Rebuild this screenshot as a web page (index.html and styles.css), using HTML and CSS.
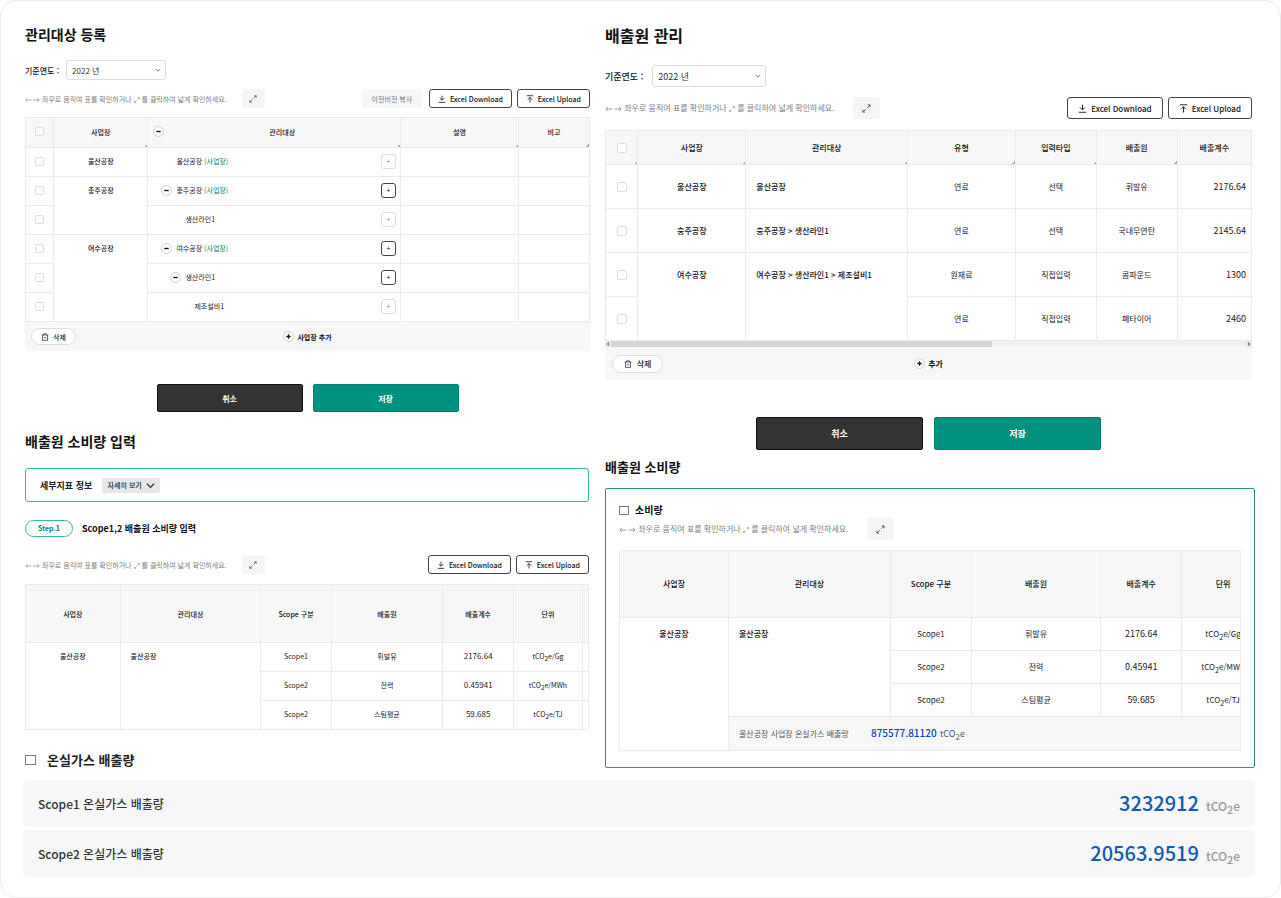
FILE: index.html
```html
<!DOCTYPE html>
<html lang="ko">
<head>
<meta charset="utf-8">
<title>배출원 관리</title>
<link rel="stylesheet" href="styles.css">
</head>
<body>
<svg class="sprite" aria-hidden="true">
  <symbol id="i-expand" viewBox="0 0 10 10"><path d="M6.4 1H9v2.6M9 1 5.8 4.2M3.6 9H1V6.4M1 9l3.2-3.2" fill="none" stroke="currentColor"/></symbol>
  <symbol id="i-arrows" viewBox="0 0 18 8"><path d="M8 4H1M3 2 1 4l2 2M10 4h7M15 2l2 2-2 2" fill="none" stroke="currentColor" stroke-width=".8"/></symbol>
  <symbol id="i-down" viewBox="0 0 10 10"><path d="M5 .8v5.4M2.2 3.8 5 6.6l2.8-2.8M1 9.2h8" fill="none" stroke="currentColor"/></symbol>
  <symbol id="i-up" viewBox="0 0 10 10"><path d="M5 9.4V3.2M2.2 5.8 5 3l2.8 2.8M1 .9h8" fill="none" stroke="currentColor"/></symbol>
  <symbol id="i-chev" viewBox="0 0 10 10"><path d="m1 3 4 4 4-4" fill="none" stroke="currentColor" stroke-width="1.3"/></symbol>
  <symbol id="i-trash" viewBox="0 0 10 10"><path d="M.8 2.5h8.4M3.3 2.3V1h3.4v1.3M1.8 2.6v6.6h6.4V2.6M3.6 5.9h2.8" fill="none" stroke="currentColor" stroke-width=".9"/></symbol>
  <symbol id="i-minus" viewBox="0 0 12 12"><circle cx="6" cy="6" r="5.4" fill="#fff" stroke="#c4c4c4" stroke-width=".9"/><path d="M3.6 6h4.8" stroke="#111" stroke-width="1.5"/></symbol>
  <symbol id="i-plus" viewBox="0 0 12 12"><circle cx="6" cy="6" r="5.4" fill="#fff" stroke="#c4c4c4" stroke-width=".9"/><path d="M3.6 6h4.8M6 3.6v4.8" stroke="#111" stroke-width="1.4"/></symbol>
  <symbol id="i-left" viewBox="0 0 6 6"><path d="M4 1v4L1.6 3z" fill="currentColor"/></symbol>
  <symbol id="i-right" viewBox="0 0 6 6"><path d="M2 1v4l2.4-2z" fill="currentColor"/></symbol>
</svg>
<main class="page">
  <div class="columns">
    <div class="col-left">
      <h2 class="title">관리대상 등록</h2>
      <div class="filter">
        <label for="year-a">기준연도 :</label>
        <span class="select"><select id="year-a"><option>2022 년</option></select><svg><use href="#i-chev"/></svg></span>
      </div>
      <div class="toolbar">
        <p class="hint"><svg class="arrows"><use href="#i-arrows"/></svg> 좌우로 움직여 표를 확인하거나 <svg class="mini"><use href="#i-expand"/></svg> 를 클릭하여 넓게 확인하세요.</p>
        <button class="expand" aria-label="넓게 보기"><svg><use href="#i-expand"/></svg></button>
        <div class="tools">
          <button class="copy">이전버전 복사</button>
          <button class="excel"><svg><use href="#i-down"/></svg>Excel Download</button>
          <button class="excel"><svg><use href="#i-up"/></svg>Excel Upload</button>
        </div>
      </div>
      <table class="grid targets">
        <colgroup><col class="w-check"><col class="w-site"><col class="w-target"><col class="w-desc"><col class="w-note"></colgroup>
        <thead>
          <tr><th><input type="checkbox" aria-label="전체 선택"></th><th class="rs">사업장</th>
            <th class="rs"><div class="tree-head"><button class="toggle" aria-label="접기"><svg><use href="#i-minus"/></svg></button><span>관리대상</span></div></th>
            <th class="rs">설명</th><th class="rs">비고</th></tr>
        </thead>
        <tbody>
          <tr><td><input type="checkbox" aria-label="선택"></td><td class="site">울산공장</td>
            <td><div class="tree d1"><span class="toggle"></span><span>울산공장 <em>(사업장)</em></span><button class="add" disabled>+</button></div></td><td></td><td></td></tr>
          <tr><td><input type="checkbox" aria-label="선택"></td><td class="site" rowspan="2">충주공장</td>
            <td><div class="tree d1"><button class="toggle" aria-label="접기"><svg><use href="#i-minus"/></svg></button><span>충주공장 <em>(사업장)</em></span><button class="add">+</button></div></td><td></td><td></td></tr>
          <tr><td><input type="checkbox" aria-label="선택"></td>
            <td><div class="tree d2"><span class="toggle"></span><span>생산라인1</span><button class="add" disabled>+</button></div></td><td></td><td></td></tr>
          <tr><td><input type="checkbox" aria-label="선택"></td><td class="site" rowspan="3">여수공장</td>
            <td><div class="tree d1"><button class="toggle" aria-label="접기"><svg><use href="#i-minus"/></svg></button><span>여수공장 <em>(사업장)</em></span><button class="add">+</button></div></td><td></td><td></td></tr>
          <tr><td><input type="checkbox" aria-label="선택"></td>
            <td><div class="tree d2"><button class="toggle" aria-label="접기"><svg><use href="#i-minus"/></svg></button><span>생산라인1</span><button class="add">+</button></div></td><td></td><td></td></tr>
          <tr><td><input type="checkbox" aria-label="선택"></td>
            <td><div class="tree d3"><span class="toggle"></span><span>제조설비1</span><button class="add" disabled>+</button></div></td><td></td><td></td></tr>
        </tbody>
      </table>
      <div class="table-foot">
        <button class="delete"><svg><use href="#i-trash"/></svg>삭제</button>
        <button class="append"><svg><use href="#i-plus"/></svg>사업장 추가</button>
      </div>
      <div class="actions"><button class="cancel">취소</button><button class="save">저장</button></div>

      <h2 class="title title-input">배출원 소비량 입력</h2>
      <div class="detail"><strong>세부지표 정보</strong><button>자세히 보기<svg><use href="#i-chev"/></svg></button></div>
      <div class="step"><span class="pill">Step.1</span><h3>Scope1,2 배출원 소비량 입력</h3></div>
      <div class="toolbar toolbar-input">
        <p class="hint"><svg class="arrows"><use href="#i-arrows"/></svg> 좌우로 움직여 표를 확인하거나 <svg class="mini"><use href="#i-expand"/></svg> 를 클릭하여 넓게 확인하세요.</p>
        <button class="expand" aria-label="넓게 보기"><svg><use href="#i-expand"/></svg></button>
        <div class="tools">
          <button class="excel"><svg><use href="#i-down"/></svg>Excel Download</button>
          <button class="excel"><svg><use href="#i-up"/></svg>Excel Upload</button>
        </div>
      </div>
      <table class="grid usage-input">
        <colgroup><col class="u-site"><col class="u-target"><col class="u-scope"><col class="u-source"><col class="u-factor"><col class="u-unit"><col class="u-rest"></colgroup>
        <thead><tr><th>사업장</th><th>관리대상</th><th>Scope 구분</th><th>배출원</th><th>배출계수</th><th>단위</th><th></th></tr></thead>
        <tbody>
          <tr><td class="site" rowspan="3">울산공장</td><td class="site start" rowspan="3">울산공장</td><td>Scope1</td><td>휘발유</td><td class="num">2176.64</td><td>tCO<sub>2</sub>e/Gg</td><td></td></tr>
          <tr><td>Scope2</td><td>전력</td><td class="num">0.45941</td><td>tCO<sub>2</sub>e/MWh</td><td></td></tr>
          <tr><td>Scope2</td><td>스팀평균</td><td class="num">59.685</td><td>tCO<sub>2</sub>e/TJ</td><td></td></tr>
        </tbody>
      </table>
      <h2 class="title title-ghg"><i class="square"></i>온실가스 배출량</h2>
    </div>

    <div class="col-right">
      <div class="source">
        <h2 class="title">배출원 관리</h2>
        <div class="filter">
          <label for="year-b">기준연도 :</label>
          <span class="select"><select id="year-b"><option>2022 년</option></select><svg><use href="#i-chev"/></svg></span>
        </div>
        <div class="toolbar">
          <p class="hint"><svg class="arrows"><use href="#i-arrows"/></svg> 좌우로 움직여 표를 확인하거나 <svg class="mini"><use href="#i-expand"/></svg> 를 클릭하여 넓게 확인하세요.</p>
          <button class="expand" aria-label="넓게 보기"><svg><use href="#i-expand"/></svg></button>
          <div class="tools">
            <button class="excel"><svg><use href="#i-down"/></svg>Excel Download</button>
            <button class="excel"><svg><use href="#i-up"/></svg>Excel Upload</button>
          </div>
        </div>
        <table class="grid sources">
          <colgroup><col class="s-check"><col class="s-site"><col class="s-target"><col class="s-site"><col class="s-mid"><col class="s-mid"><col class="s-last"></colgroup>
          <thead><tr><th class="rs"><input type="checkbox" aria-label="전체 선택"></th><th class="rs">사업장</th><th class="rs">관리대상</th><th class="rs">유형</th><th class="rs">입력타입</th><th class="rs">배출원</th><th>배출계수</th></tr></thead>
          <tbody>
            <tr><td><input type="checkbox" aria-label="선택"></td><td class="site">울산공장</td><td class="site start">울산공장</td><td>연료</td><td>선택</td><td>휘발유</td><td class="num end">2176.64</td></tr>
            <tr><td><input type="checkbox" aria-label="선택"></td><td class="site">충주공장</td><td class="site start">충주공장 &gt; 생산라인1</td><td>연료</td><td>선택</td><td>국내무연탄</td><td class="num end">2145.64</td></tr>
            <tr><td><input type="checkbox" aria-label="선택"></td><td class="site" rowspan="2">여수공장</td><td class="site start" rowspan="2">여수공장 &gt; 생산라인1 &gt; 제조설비1</td><td>원재료</td><td>직접입력</td><td>콤파운드</td><td class="num end">1300</td></tr>
            <tr><td><input type="checkbox" aria-label="선택"></td><td>연료</td><td>직접입력</td><td>폐타이어</td><td class="num end">2460</td></tr>
          </tbody>
        </table>
        <div class="scroll"><svg><use href="#i-left"/></svg><div class="track"><div class="thumb"></div></div><svg><use href="#i-right"/></svg></div>
        <div class="table-foot">
          <button class="delete"><svg><use href="#i-trash"/></svg>삭제</button>
          <button class="append"><svg><use href="#i-plus"/></svg>추가</button>
        </div>
        <div class="actions"><button class="cancel">취소</button><button class="save">저장</button></div>
      </div>

      <h2 class="title title-usage">배출원 소비량</h2>
      <section class="usage">
        <h3><i class="square"></i>소비량</h3>
        <div class="toolbar">
          <p class="hint"><svg class="arrows"><use href="#i-arrows"/></svg> 좌우로 움직여 표를 확인하거나 <svg class="mini"><use href="#i-expand"/></svg> 를 클릭하여 넓게 확인하세요.</p>
          <button class="expand" aria-label="넓게 보기"><svg><use href="#i-expand"/></svg></button>
        </div>
        <div class="clip">
          <table class="grid usage-table">
            <colgroup><col class="c-site"><col class="c-target"><col class="c-mid"><col class="c-source"><col class="c-mid"><col class="c-last"></colgroup>
            <thead><tr><th>사업장</th><th>관리대상</th><th>Scope 구분</th><th>배출원</th><th>배출계수</th><th>단위</th></tr></thead>
            <tbody>
              <tr><td class="site" rowspan="4">울산공장</td><td class="site start" rowspan="3">울산공장</td><td>Scope1</td><td>휘발유</td><td class="num">2176.64</td><td>tCO<sub>2</sub>e/Gg</td></tr>
              <tr><td>Scope2</td><td>전력</td><td class="num">0.45941</td><td>tCO<sub>2</sub>e/MWh</td></tr>
              <tr><td>Scope2</td><td>스팀평균</td><td class="num">59.685</td><td>tCO<sub>2</sub>e/TJ</td></tr>
              <tr class="total"><td colspan="5">울산공장 사업장 온실가스 배출량 <b>875577.81120</b> <span>tCO<sub>2</sub>e</span></td></tr>
            </tbody>
          </table>
        </div>
      </section>
    </div>
  </div>

  <dl class="summary">
    <div><dt>Scope1 온실가스 배출량</dt><dd><b>3232912</b><span>tCO<sub>2</sub>e</span></dd></div>
    <div><dt>Scope2 온실가스 배출량</dt><dd><b>20563.9519</b><span>tCO<sub>2</sub>e</span></dd></div>
  </dl>
</main>
</body>
</html>
```
FILE: styles.css
```css
* { box-sizing: border-box; }
body, h2, h3, p, dl, dd { margin: 0; }
body {
  background: #fff;
  color: #222;
  font-family: "Noto Sans CJK KR", "Noto Sans", sans-serif;
  font-size: 8px;
}
button, input, select { font: inherit; color: inherit; margin: 0; padding: 0; }
button { background: none; border: 0; display: inline-flex; align-items: center; justify-content: center; white-space: nowrap; }
svg { display: block; flex: none; }
sub { font-size: 90%; line-height: 0; }
.sprite { position: absolute; width: 0; height: 0; }

.page { border: 1px solid #ebebeb; border-radius: 16px; padding: 23px 25px 20px 22px; }
.columns { display: grid; grid-template-columns: minmax(0, 567fr) minmax(0, 650fr); gap: 15px; }
.col-left { padding-left: 2px; display: flex; flex-direction: column; }
.col-right { display: flex; flex-direction: column; font-size: 8px; }
.source { margin-right: 3px; }

.title { font-size: 14px; line-height: 20px; font-weight: 700; color: #111; display: flex; align-items: center; }
.source .title { font-size: 16px; line-height: 22px; }
.title-input { margin-top: 19px; }
.title-ghg { font-size: 13px; margin-top: 20px; gap: 11px; color: #222; }
.title-usage { font-size: 13px; line-height: 18px; margin-top: 8px; }
.square { width: 11px; height: 10px; border: 1px solid #777; }

.filter { display: flex; align-items: center; gap: 7px; margin-top: 16px; font-weight: 500; color: #111; }
.select { position: relative; width: 100px; height: 20px; }
.select select { appearance: none; width: 100%; height: 100%; border: 1px solid #ddd; border-radius: 3px; background: #fff; padding: 0 5px; color: #333; font-weight: 400; }
.select svg { position: absolute; right: 5px; top: 50%; width: 6px; height: 6px; margin-top: -3px; color: #555; pointer-events: none; }
.source .filter { margin-top: 19px; font-size: 9px; gap: 9px; }
.source .select { width: 114px; height: 22px; }

.toolbar { display: flex; align-items: center; margin-top: 9px; height: 19px; }
.hint { color: #808080; font-size: 7px; line-height: 12px; white-space: nowrap; }
.hint svg { display: inline-block; vertical-align: middle; }
.arrows { width: 15px; height: 8px; }
.mini { width: 6px; height: 6px; }
.expand { width: 23px; height: 19px; margin-left: 15px; background: #f5f5f5; border-radius: 2px; color: #555; }
.expand svg { width: 8px; height: 8px; }
.tools { margin-left: auto; display: flex; gap: 5px; }
.copy { width: 60px; height: 19px; margin-right: 2px; background: #f6f6f6; border-radius: 2px; color: #777; font-size: 7px; }
.excel { height: 19px; padding: 0 8px; gap: 4px; border: 1px solid #444; border-radius: 3px; background: #fff; color: #111; font-size: 7px; font-weight: 500; }
.excel svg { width: 8px; height: 8px; }
.toolbar-input { margin-top: 18px; padding-right: 1px; }
.col-right .toolbar { height: 22px; margin-top: 10px; }
.col-right .hint { font-size: 8px; }
.col-right .arrows { width: 17px; }
.col-right .expand { width: 27px; height: 22px; margin-left: 19px; }
.col-right .expand svg { width: 9px; height: 9px; }
.col-right .excel { height: 22px; font-size: 8px; padding: 0 10px; }
.col-right .excel svg { width: 9px; height: 9px; }

.grid { width: 100%; table-layout: fixed; border-collapse: collapse; margin-top: 9px; font-size: 7px; line-height: 12px; }
.grid th, .grid td { border: 1px solid #ebebee; padding: 0; text-align: center; }
.grid th { background: #f7f7f7; font-weight: 500; color: #111; }
.grid .rs { background: linear-gradient(135deg, transparent 50%, #aaa 50%) right bottom / 3px 3px no-repeat #f7f7f7; }
.grid .site { vertical-align: top; padding-top: 8px; font-weight: 500; color: #111; }
.grid .start { text-align: left; padding-left: 10px; }
.grid .num { font-size: 8px; }
.grid .end { text-align: right; padding-right: 5px; }
input[type="checkbox"] { appearance: none; display: block; width: 9px; height: 9px; margin: 0 auto; border: 1px solid #ddd; border-radius: 2px; background: #fff; }

.targets th { height: 30px; padding-bottom: 2px; }
.targets td { height: 29px; padding-bottom: 2px; }
.targets .site, .usage-input .site { padding-top: 7px; }
.w-check { width: 5%; } .w-site { width: 16.7%; } .w-target { width: 44.8%; } .w-desc { width: 20.9%; } .w-note { width: 12.6%; }
.toggle { width: 11px; height: 11px; }
.toggle svg { width: 11px; height: 11px; }
.tree-head { display: flex; align-items: center; padding-left: 5px; }
.tree-head span { flex: 1; }
.tree { display: flex; align-items: center; gap: 4px; padding-right: 4px; }
.tree em { font-style: normal; color: #00806c; }
.d1 { padding-left: 13px; } .d2 { padding-left: 22px; } .d3 { padding-left: 31px; }
.add { width: 15px; height: 15px; margin-left: auto; border: 1px solid #444; border-radius: 3px; background: #fff; line-height: 12px; color: #111; }
.add:disabled { border-color: #ddd; color: #888; }

.table-foot { display: grid; grid-template-columns: 1fr auto 1fr; align-items: center; height: 29px; background: #f7f7f7; padding: 0 6px; }
.delete { justify-self: start; width: 45px; height: 17px; gap: 4px; border: 1px solid #ddd; border-radius: 9px; background: #fff; font-weight: 500; font-size: 7px; }
.delete svg { width: 8px; height: 8px; }
.append { gap: 3px; font-weight: 700; font-size: 7px; color: #111; }
.append svg { width: 11px; height: 11px; }

.actions { display: flex; justify-content: center; gap: 10px; margin-top: 33px; }
.actions button { width: 146px; height: 28px; border-radius: 2px; color: #fff; font-weight: 700; border: 1px solid #111; background: #333; }
.actions .save { background: #009180; border-color: #007f6e; }

.detail { display: flex; align-items: center; gap: 10px; height: 34px; margin: 17px 1px 0 0; padding-left: 14px; border: 1px solid #3cb5a2; border-radius: 3px; font-size: 9px; }
.detail strong { font-weight: 700; color: #222; }
.detail button { width: 58px; height: 15px; gap: 4px; background: #e7e7e7; border-radius: 2px; font-size: 7px; font-weight: 500; }
.detail svg { width: 9px; height: 9px; }
.step { display: flex; align-items: center; gap: 9px; margin-top: 18px; height: 17px; }
.pill { width: 48px; height: 17px; border: 1px solid #3cb5a2; border-radius: 9px; color: #00806c; font-weight: 700; font-size: 7px; line-height: 15px; text-align: center; }
.step h3 { font-size: 9px; font-weight: 700; color: #111; }

.usage-input { width: auto; margin: 10px 1px 0 0; }
.usage-input th { height: 58px; }
.usage-input td { height: 29px; padding-bottom: 2px; }
.u-site { width: 16.8%; } .u-target { width: 25%; } .u-scope { width: 12.5%; } .u-source { width: 19.8%; } .u-factor { width: 12.6%; } .u-unit { width: 12.2%; } .u-rest { width: 1.1%; }

.col-right .grid { font-size: 8px; }
.col-right .num { font-size: 9px; }
.col-right input[type="checkbox"] { width: 10px; height: 10px; }
.col-right .sources { margin-top: 11px; }
.sources th { height: 34px; }
.sources td { height: 44px; }
.sources .site { padding-top: 16px; }
.s-check { width: 5%; } .s-site { width: 16.7%; } .s-target { width: 25%; } .s-mid { width: 12.5%; } .s-last { width: 11.5%; }
.scroll { display: flex; height: 6px; background: #f1f1f1; color: #777; }
.scroll svg { width: 6px; height: 6px; background: #e4e4e4; }
.track { flex: 1; }
.thumb { width: 60%; height: 6px; background: #d6d6d6; }
.col-right .table-foot { height: 33px; padding: 0 7px; }
.col-right .delete { width: 51px; height: 18px; font-size: 8px; gap: 5px; }
.col-right .append { font-size: 8px; }
.col-right .actions { gap: 11px; margin-top: 37px; }
.col-right .actions button { width: 167px; height: 33px; font-size: 9px; }

.usage { margin-top: 12px; padding: 13px 13px 16px; border: 1px solid #2f8e85; border-radius: 2px; }
.usage h3 { display: flex; align-items: center; gap: 6px; font-size: 10px; line-height: 16px; font-weight: 700; color: #111; }
.usage h3 .square { width: 10px; height: 9px; }
.col-right .usage .toolbar { margin-top: 0; }
.clip { overflow-x: auto; scrollbar-width: none; margin-top: 10px; border-right: 1px solid #ebebee; }
.clip .usage-table { width: 104%; margin: 0; }
.usage-table th { height: 67px; }
.usage-table td { height: 33px; }
.usage-table .site { padding-top: 10px; }
.c-site { width: 16.9%; } .c-target { width: 25.1%; } .c-mid { width: 12.6%; } .c-source { width: 20%; } .c-last { width: 12.8%; }
.grid .total td { height: 34px; background: #f7f7f7; text-align: left; padding-left: 10px; color: #555; }
.total b { margin: 0 1px 0 20px; font-size: 10px; font-weight: 500; color: #0046ad; }
.total span { font-size: 9px; }

.summary { display: grid; gap: 3px; margin-top: 10px; }
.summary div { display: flex; align-items: center; justify-content: space-between; height: 47px; padding: 0 15px; background: #f7f7f7; border-radius: 4px; font-size: 12px; }
.summary dt { color: #333; font-weight: 500; }
.summary dd { display: flex; align-items: baseline; gap: 7px; padding-bottom: 2px; color: #999; font-weight: 500; }
.summary b { font-size: 20px; line-height: 30px; font-weight: 500; color: #0d5cb6; }
```
